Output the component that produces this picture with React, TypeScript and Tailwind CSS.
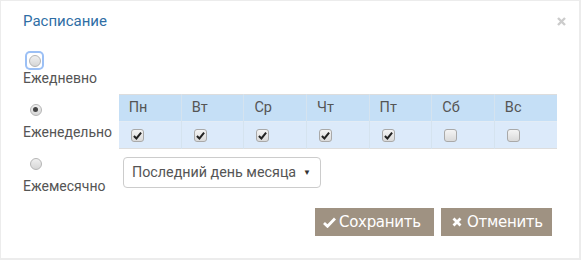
import { useState } from "react";

// ── Small form controls ───────────────────────────────────────────────────────

function Radio({ checked, focused }: { checked?: boolean; focused?: boolean }) {
  return (
    <span
      className={
        "flex h-[15px] w-[15px] items-center justify-center " +
        (focused ? "rounded-[3px] shadow-[0_0_0_2px_#9cc0f5]" : "")
      }
    >
      <span className="flex h-[12px] w-[12px] items-center justify-center rounded-full border border-[#b5b5b5] bg-gradient-to-b from-[#f0f0f0] to-[#d6d6d6]">
        {checked && <span className="h-[5px] w-[5px] rounded-full bg-[#444]" />}
      </span>
    </span>
  );
}

function Check({ checked }: { checked: boolean }) {
  return (
    <span className="flex h-[13px] w-[13px] items-center justify-center rounded-[3px] border border-[#a9a9a9] bg-gradient-to-b from-[#f4f4f4] to-[#dadada]">
      {checked && (
        <svg width="9" height="9" viewBox="0 0 10 10">
          <path d="M1 5.5 L3.8 8.3 L9 1.8" fill="none" stroke="#222" strokeWidth="2.2" />
        </svg>
      )}
    </span>
  );
}

const days = ["Пн", "Вт", "Ср", "Чт", "Пт", "Сб", "Вс"];

export default function App() {
  const [picked] = useState([true, true, true, true, true, false, false]);

  return (
    <div className="h-[261px] w-[582px] bg-white">
      <div
        className="relative h-[260px] w-[581px] border-2 border-t border-l border-[#ececec] px-[22px] pt-[10px] text-[#555]"
        style={{ fontFamily: "Roboto, 'Noto Sans', sans-serif" }}
      >
        <svg className="absolute right-[13px] top-[16px]" width="9" height="9" viewBox="0 0 9 9">
          <path d="M1 1 L8 8 M8 1 L1 8" stroke="#cccccc" strokeWidth="2.4" />
        </svg>

        <h1 className="text-[15px] leading-[20px] text-[#2f6ea5]">Расписание</h1>

        {/* ── Ежедневно ── */}
        <div className="mt-[22px] flex flex-col">
          <div className="pl-[4px]">
            <Radio focused />
          </div>
          <p className="text-[14px] leading-[20px]">Ежедневно</p>
        </div>

        {/* ── Еженедельно ── */}
        <div className="mt-[6px] flex">
          <div className="w-[96px] pt-[8px]">
            <div className="pl-[5px]">
              <Radio checked />
            </div>
            <p className="mt-[5px] text-[14px] leading-[20px]">Еженедельно</p>
          </div>
          <table className="w-[440px] border-collapse border-y border-[#dddddd] text-[14.5px]">
            <thead>
              <tr className="bg-[#c5dff6]">
                {days.map((d) => (
                  <th
                    key={d}
                    className="h-[27px] w-[63px] border-x border-[#d5e3ef] pl-[10px] text-left font-normal first:border-l-0 last:border-r-0"
                  >
                    {d}
                  </th>
                ))}
              </tr>
            </thead>
            <tbody>
              <tr className="border-t border-[#e3ecf5] bg-[#dceafa]">
                {picked.map((c, i) => (
                  <td
                    key={i}
                    className="h-[27px] border-x border-[#d5e3ef] pl-[12px] first:border-l-0 last:border-r-0"
                  >
                    <Check checked={c} />
                  </td>
                ))}
              </tr>
            </tbody>
          </table>
        </div>

        {/* ── Ежемесячно ── */}
        <div className="mt-[7px] flex">
          <div className="w-[96px]">
            <div className="pl-[5px]">
              <Radio />
            </div>
            <p className="mt-[5px] text-[14px] leading-[20px]">Ежемесячно</p>
          </div>
          <div className="ml-[4px] mt-[1px] flex h-[31px] w-[198px] items-center justify-between rounded-[4px] border border-[#cccccc] pl-[8px] pr-[9px] text-[14.3px]">
            <span>Последний день месяца</span>
            <span className="text-[8px] text-[#333]">▼</span>
          </div>
        </div>

        {/* ── Buttons ── */}
        <div
          className="mt-[12px] flex justify-end gap-[7px] pr-[5px] text-white"
          style={{ fontFamily: "'DejaVu Sans', Verdana, sans-serif" }}
        >
          <button className="flex h-[28px] w-[119px] items-center gap-[3px] bg-[#9f9282] pl-[8px]">
            <svg width="13" height="11" viewBox="0 0 13 11">
              <path d="M1 6 L4.5 9.3 L12 1.5" fill="none" stroke="#fff" strokeWidth="2.8" />
            </svg>
            <span className="text-[15px] tracking-[-0.3px]">Сохранить</span>
          </button>
          <button className="flex h-[28px] w-[111px] items-center gap-[5px] bg-[#9f9282] pl-[11px]">
            <svg width="10" height="10" viewBox="0 0 10 10">
              <path d="M1.5 1.5 L8.5 8.5 M8.5 1.5 L1.5 8.5" stroke="#fff" strokeWidth="2.8" />
            </svg>
            <span className="text-[15px] tracking-[-0.3px]">Отменить</span>
          </button>
        </div>
      </div>
    </div>
  );
}
